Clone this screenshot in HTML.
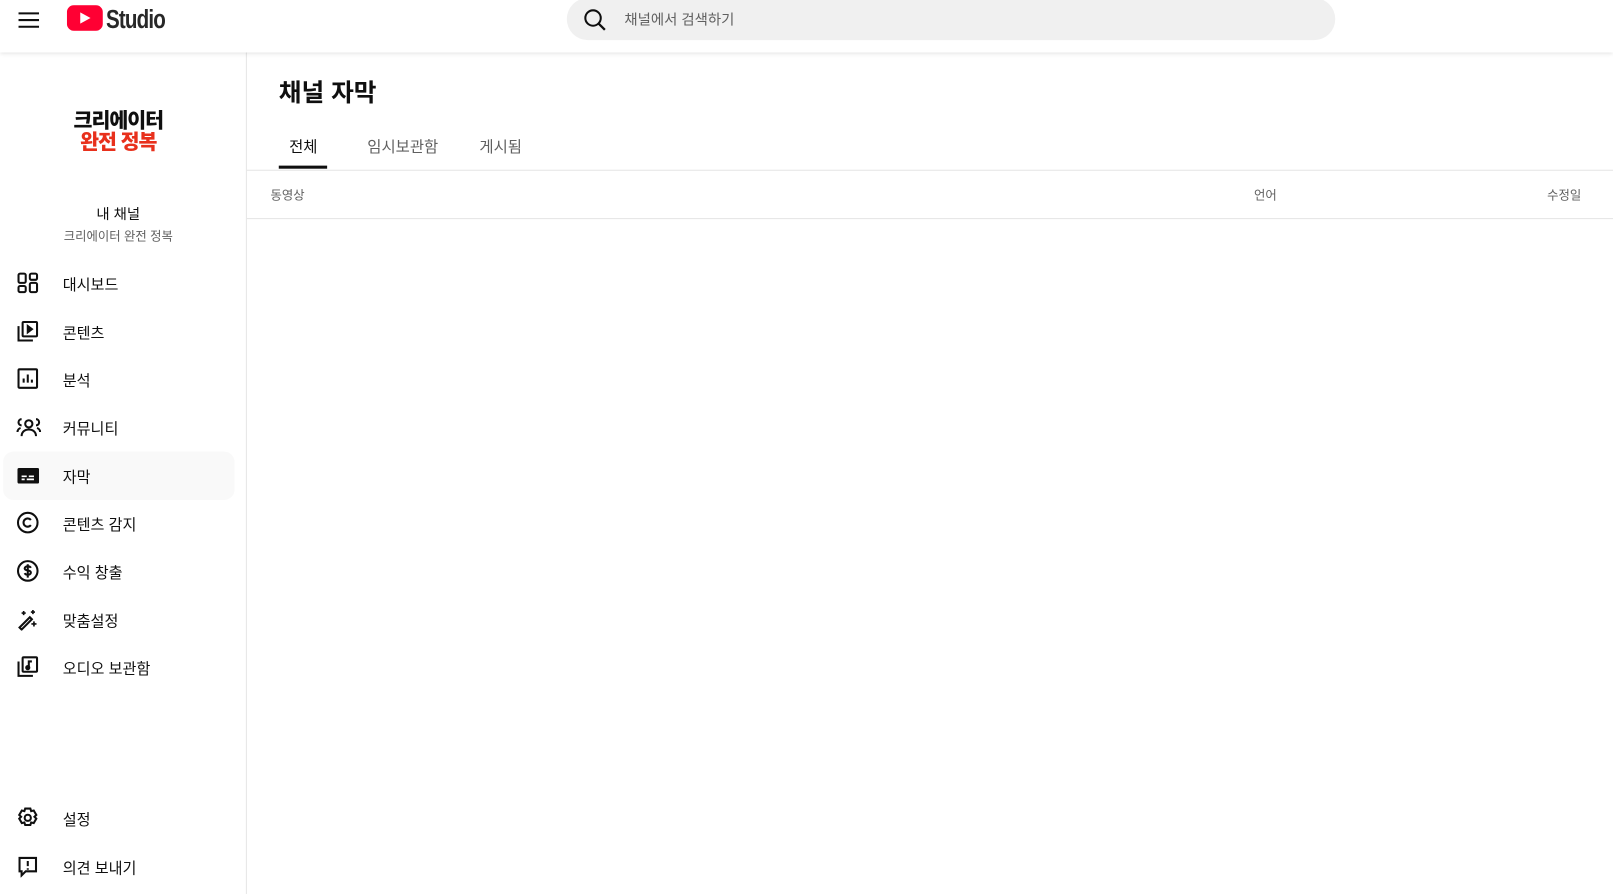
<!DOCTYPE html>
<html><head><meta charset="utf-8"><style>
*{box-sizing:border-box;margin:0;padding:0}
body{width:1613px;height:894px;overflow:hidden;background:#fff;font-family:"Liberation Sans","Noto Sans CJK KR",sans-serif;color:#0f0f0f;position:relative}
#w{position:absolute;left:0;top:0;width:1568px;height:869px;transform:scale(1.0287);transform-origin:0 0}
.hdr{position:absolute;left:0;top:0;width:1568px;height:51px;background:#fff;box-shadow:0 1px 4px rgba(0,0,0,.12);z-index:2}
.search{position:absolute;left:551px;top:-2px;width:747px;height:41px;border-radius:21px;background:#f0f0f0}
.search span{position:absolute;left:56px;top:11px;font-size:14px;color:#606060}
.side{position:absolute;left:0;top:51px;width:240px;height:818px;border-right:1px solid #e5e5e5}
.item{position:absolute;left:3px;width:225px;height:47px;border-radius:10px}
.item svg{position:absolute;left:13px;top:12px}
.item span{position:absolute;left:58px;top:14px;font-size:14.7px}
.sel{background:#f9f9f9}
.tab{position:absolute;top:132px;font-size:15px;color:#606060}
</style></head><body><div id="w">
<div class="hdr">
<svg style="position:absolute;left:18px;top:11px" width="20" height="17" viewBox="0 0 20 17"><path d="M0 2h20M0 8.5h20M0 15h20" stroke="#0f0f0f" stroke-width="2"/></svg>
<svg style="position:absolute;left:65px;top:5px" width="35" height="25" viewBox="0 0 35 25"><rect width="35" height="25" rx="7" fill="#ff0033"/><path d="M13 7v11l10-5.5z" fill="#fff"/></svg>
<div style="position:absolute;left:103px;top:5px;font-size:25px;font-weight:bold;letter-spacing:-1px;transform:scaleX(.8);transform-origin:left;color:#282828">Studio</div>
<div class="search"><svg style="position:absolute;left:16px;top:10px" width="22" height="22" viewBox="0 0 22 22"><circle cx="9.5" cy="9.5" r="7.5" fill="none" stroke="#0f0f0f" stroke-width="2"/><path d="M15 15l6 6" stroke="#0f0f0f" stroke-width="2.2"/></svg><span>채널에서 검색하기</span></div>
</div>
<div class="side">
<div style="position:absolute;left:0;width:230px;top:57px;text-align:center;font-weight:900;font-size:20px;line-height:21px;letter-spacing:-1px">크리에이터<br><span style="color:#e8301c">완전 정복</span></div>
<div style="position:absolute;left:0;width:230px;top:147px;text-align:center;font-size:14px">내 채널</div>
<div style="position:absolute;left:0;width:230px;top:170px;text-align:center;font-size:12px;color:#606060">크리에이터 완전 정복</div>
<div class="item" style="top:201px"><svg width="22" height="22" viewBox="0 0 22 22" fill="none" stroke="#0f0f0f" stroke-width="2"><rect x="2" y="2" width="7" height="9" rx="1.5"/><rect x="2" y="14" width="7" height="6" rx="1.5"/><rect x="13" y="2" width="7" height="6" rx="1.5"/><rect x="13" y="11" width="7" height="9" rx="1.5"/></svg><span>대시보드</span></div>
<div class="item" style="top:248px"><svg width="22" height="22" viewBox="0 0 22 22" fill="none" stroke="#0f0f0f" stroke-width="2"><rect x="6" y="2" width="14" height="14" rx="1"/><path d="M2 6v14h14"/><path d="M11 6v6l4-3z" fill="#0f0f0f"/></svg><span>콘텐츠</span></div>
<div class="item" style="top:294px"><svg width="22" height="22" viewBox="0 0 22 22" fill="none" stroke="#0f0f0f" stroke-width="2"><rect x="2" y="2" width="18" height="18" rx="1"/><path d="M7 15v-4M11 15V7M15 15v-3"/></svg><span>분석</span></div>
<div class="item" style="top:341px"><svg width="24" height="22" viewBox="0 0 24 22" fill="none" stroke="#0f0f0f" stroke-width="2"><circle cx="12" cy="8" r="3.5"/><path d="M5 20c0-4 3-6.5 7-6.5s7 2.5 7 6.5"/><path d="M5 3.5a3 3 0 0 0 0 6M19 3.5a3 3 0 0 1 0 6M1 16c0-2 1.5-3.5 3-4M23 16c0-2-1.5-3.5-3-4"/></svg><span>커뮤니티</span></div>
<div class="item sel" style="top:388px"><svg width="22" height="22" viewBox="0 0 22 22"><rect x="1" y="4" width="21" height="15" rx="1.5" fill="#0f0f0f"/><path d="M5 12h5M12 12h5M5 15h3M10 15h7" stroke="#fff" stroke-width="1.6"/></svg><span>자막</span></div>
<div class="item" style="top:434px"><svg width="22" height="22" viewBox="0 0 22 22" fill="none" stroke="#0f0f0f" stroke-width="2"><circle cx="11" cy="11" r="9.5"/><path d="M14 8.5a4 4 0 1 0 0 5"/></svg><span>콘텐츠 감지</span></div>
<div class="item" style="top:481px"><svg width="22" height="22" viewBox="0 0 22 22" fill="none" stroke="#0f0f0f" stroke-width="2"><circle cx="11" cy="11" r="9.5"/><path d="M14 8c-.5-1-1.5-1.5-3-1.5s-3 .7-3 2 1.3 1.7 3 2 3 .8 3 2.2-1.5 2-3 2-2.6-.6-3-1.6M11 4.5v13"/></svg><span>수익 창출</span></div>
<div class="item" style="top:528px"><svg width="22" height="22" viewBox="0 0 22 22" fill="none" stroke="#0f0f0f" stroke-width="2"><path d="M3 19l10-10 2 2-10 10z"/><path d="M7 3v4M5 5h4M16 2v4M14 4h4M17 13v5M14.5 15.5h5" stroke-width="1.6"/></svg><span>맞춤설정</span></div>
<div class="item" style="top:574px"><svg width="22" height="22" viewBox="0 0 22 22" fill="none" stroke="#0f0f0f" stroke-width="2"><rect x="6" y="2" width="14" height="14" rx="1"/><path d="M2 6v14h14"/><path d="M12 12V6h3" /><circle cx="11" cy="12" r="1.5" fill="#0f0f0f"/></svg><span>오디오 보관함</span></div>
<div class="item" style="top:721px"><svg width="22" height="22" viewBox="0 0 22 22" fill="none" stroke="#0f0f0f" stroke-width="2"><path d="M8.5 2h5l.8 2.5 2.5-.6 2.5 4.3-1.8 1.8 1.8 1.8-2.5 4.3-2.5-.6-.8 2.5h-5l-.8-2.5-2.5.6-2.5-4.3L4.5 10 2.7 8.2 5.2 3.9l2.5.6z"/><circle cx="11" cy="11" r="3"/></svg><span>설정</span></div>
<div class="item" style="top:768px"><svg width="22" height="22" viewBox="0 0 22 22" fill="none" stroke="#0f0f0f" stroke-width="2"><path d="M3 3h16v13H9l-4 4v-4H3z"/><path d="M11 6v5M11 13v1.5"/></svg><span>의견 보내기</span></div>
</div>
<div style="position:absolute;left:271px;top:70px;font-size:24px;font-weight:bold">채널 자막</div>
<div class="tab" style="left:281px;color:#0f0f0f">전체</div>
<div style="position:absolute;left:271px;top:161px;width:47px;height:3px;background:#0f0f0f"></div>
<div class="tab" style="left:357px">임시보관함</div>
<div class="tab" style="left:466px">게시됨</div>
<div style="position:absolute;left:240px;top:165px;width:1328px;height:1px;background:#e5e5e5"></div>
<div style="position:absolute;left:263px;top:181px;font-size:12px;color:#606060">동영상</div>
<div style="position:absolute;left:1219px;top:181px;font-size:12px;color:#606060">언어</div>
<div style="position:absolute;left:1504px;top:181px;font-size:12px;color:#606060">수정일</div>
<div style="position:absolute;left:240px;top:212px;width:1328px;height:1px;background:#e5e5e5"></div>
</div></body></html>
